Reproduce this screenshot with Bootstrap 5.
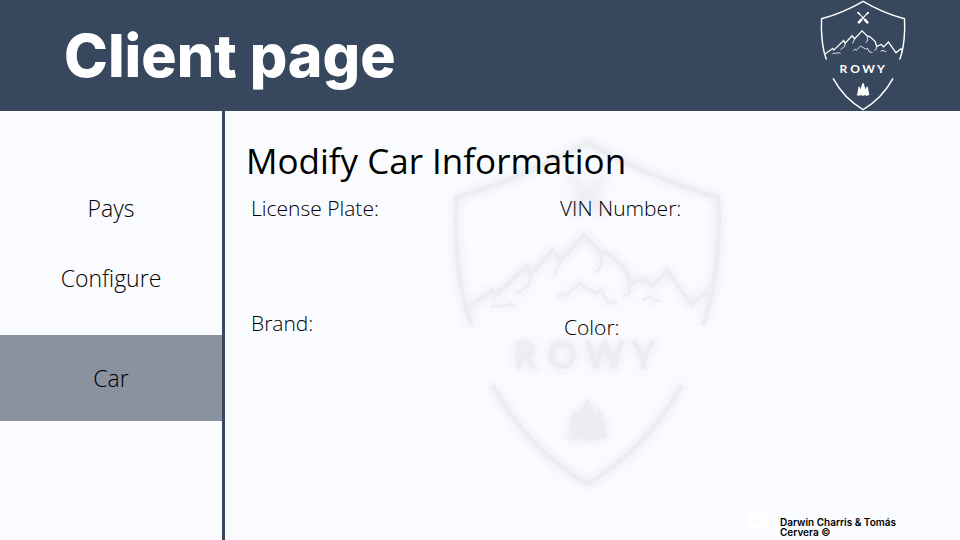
<!DOCTYPE html>
<html lang="en">
<head>
<meta charset="utf-8">
<meta name="viewport" content="width=device-width, initial-scale=1">
<title>Client page</title>
<link href="https://cdn.jsdelivr.net/npm/bootstrap@5.3.0/dist/css/bootstrap.min.css" rel="stylesheet">
<style>
  body { background: #fafbfe; color: #000; font-family: "Open Sans", "Noto Sans", sans-serif; }
  .site-header { background: #37475d; color: #fff; padding: 0 54px 0 64px; min-height: 111px; }
  .site-title { font: 800 59px/76px Inter, sans-serif; }
  .brand-logo { width: 86px; height: 111px; }
  .side-nav { flex: 0 0 225px; border-right: 3px solid #37475d; padding-top: 62px; }
  .side-link { color: #000; font-size: 23px; font-weight: 300; line-height: 70px; text-align: center; text-decoration: none; }
  .side-link.active { background: #8a92a0; line-height: 86px; margin-top: 22px; }
  .content { padding: 26px 24px 0 21px; }
  .page-heading { font-size: 35px; font-weight: 400; line-height: 48px; }
  .watermark { position: absolute; left: 227px; top: 27px; width: 270px; height: 350px; color: #ecedf1; filter: drop-shadow(0 0 5px #e4e6eb); --tool-filter: blur(14px); }
  .tools { filter: var(--tool-filter, none); }
  .car-form { padding-left: 5px; }
  .form-row { display: grid; grid-template-columns: 309px 1fr; min-height: 115px; }
  .form-row label { font-size: 21px; font-weight: 300; line-height: 30px; }
  .form-row .form-control { background: transparent; max-width: 260px; }
  .credit { font: 600 10px/10px Inter, sans-serif; padding: 0 60px 3px 0; gap: 13px; }
  .credit-text { width: 120px; }
  .video-chip { width: 20px; height: 16px; }
</style>
</head>
<body class="min-vh-100 d-flex flex-column">
<header class="site-header d-flex align-items-center justify-content-between">
  <h1 class="site-title mb-0">Client page</h1>
  <svg class="brand-logo" viewBox="36 24 810 1050" role="img" aria-label="ROWY">
    <symbol id="rowy" viewBox="36 24 810 1050">
      <g fill="none" stroke="currentColor" stroke-width="14">
        <path d="M95 586C72 530 61 470 53 390Q44 300 49 202Q260 142 442 36Q622 142 834 202Q839 300 830 390C822 470 811 530 788 586"/>
        <path d="M158 766Q260 955 442 1062Q622 955 725 766"/>
        <path stroke-width="12" d="M85 532L155 481 165 498 258 408 272 432 338 362 362 390 432 316 480 364 505 370 555 415 570 462 615 445 636 468 682 422 753 524 800 485 812 502"/>
        <path stroke-width="8" d="M272 432L268 462 228 494M362 390L342 436M480 364L486 402 468 428M570 462L568 488 548 500M350 502L368 490 376 500 418 460 470 490 484 480 500 514 530 520M152 532L170 526 182 530 210 522 228 528M608 510L630 500 642 508 662 514"/>
      </g>
      <g class="tools" fill="none" stroke="currentColor" stroke-linecap="round">
        <path stroke-width="11" d="M396 144L484 238M488 144L400 238"/>
        <path stroke-width="24" d="M460 212L482 236M424 212L402 236"/>
        <path stroke-width="16" d="M394 144L404 154M490 144L480 154"/>
      </g>
      <text x="219 320 434 574" y="716" font-family="Lato, sans-serif" font-size="114" font-weight="700" fill="currentColor">ROWY</text>
      <path fill="currentColor" d="M442 804L457 834 451 834 465 858 459 860 466 868 478 838 491 858 486 860 496 880 490 882 500 900 494 902 503 922 484 925 482 932 472 932 470 925 446 925 445 932 434 932 432 925 408 925 406 932 398 932 397 925 378 926 392 908 385 906 394 890 389 888 397 872 392 870 399 856 394 854 405 840 418 868 422 860 418 858 430 834 425 834Z"/>
    </symbol>
    <use href="#rowy" x="36" y="24" width="810" height="1050"/>
  </svg>
</header>

<div class="d-flex flex-grow-1">
  <nav class="side-nav d-flex flex-column" aria-label="Client">
    <a class="side-link" href="#pays">Pays</a>
    <a class="side-link" href="#configure">Configure</a>
    <a class="side-link active" href="#car" aria-current="page">Car</a>
  </nav>

  <div class="position-relative flex-grow-1 d-flex flex-column">
    <svg class="watermark" aria-hidden="true"><use href="#rowy"/></svg>
    <main class="content position-relative flex-grow-1">
      <h2 class="page-heading mb-2">Modify Car Information</h2>
      <form class="car-form">
        <div class="form-row">
          <div><label for="plate">License Plate:</label><input id="plate" class="form-control border-0"></div>
          <div><label for="vin">VIN Number:</label><input id="vin" class="form-control border-0"></div>
        </div>
        <div class="form-row">
          <div><label for="brand">Brand:</label><input id="brand" class="form-control border-0"></div>
          <div class="ps-1 pt-1"><label for="color">Color:</label><input id="color" class="form-control border-0"></div>
        </div>
      </form>
    </main>
    <footer class="credit position-relative d-flex justify-content-end align-items-start">
      <svg class="video-chip" viewBox="0 0 20 16" aria-hidden="true"><rect width="20" height="16" rx="2" fill="#fefeff"/><path d="M8 5l5 3-5 3z" fill="#f8f9fb"/></svg>
      <div class="credit-text pt-1">Darwin Charris &amp; Tomás Cervera ©</div>
    </footer>
  </div>
</div>
<script src="https://cdn.jsdelivr.net/npm/bootstrap@5.3.0/dist/js/bootstrap.bundle.min.js"></script>
</body>
</html>
